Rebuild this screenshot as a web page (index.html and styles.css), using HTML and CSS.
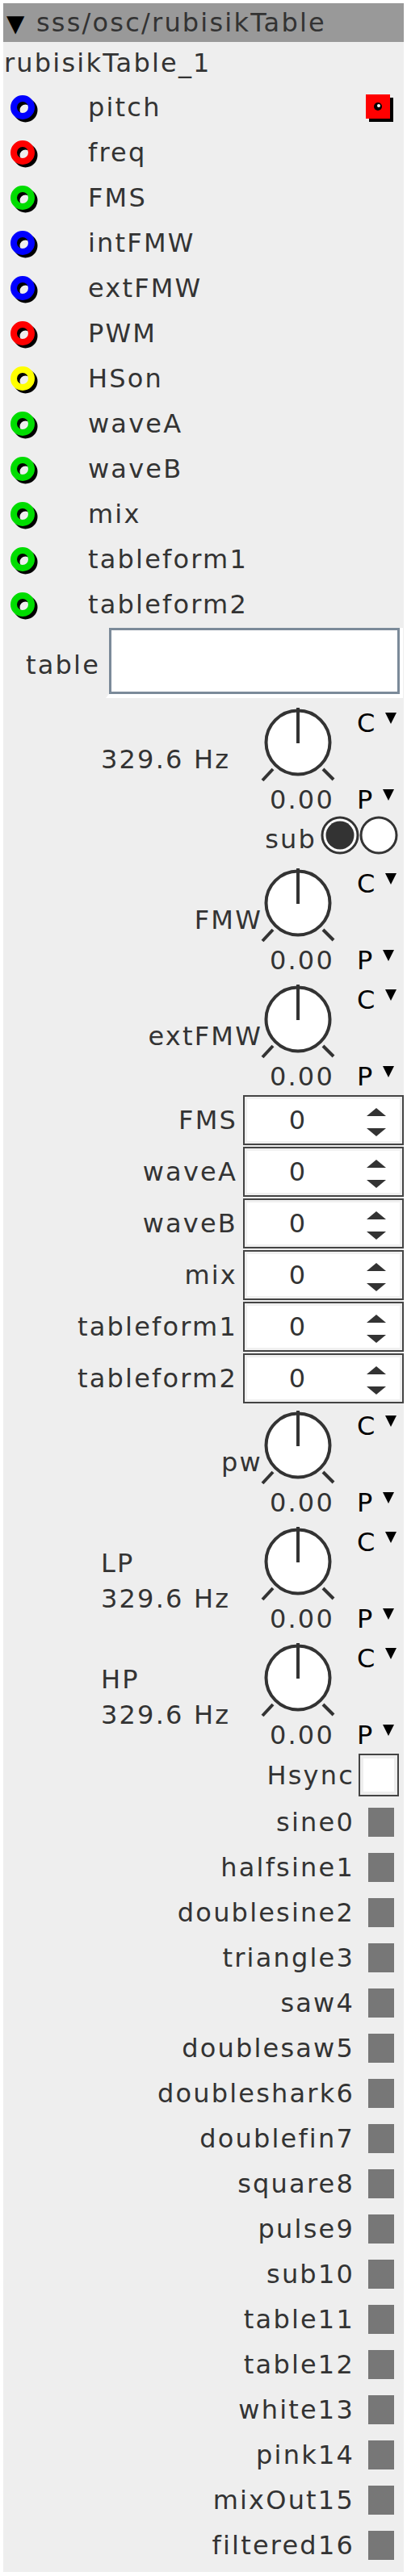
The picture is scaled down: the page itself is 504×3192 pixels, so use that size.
FILE: index.html
```html
<!DOCTYPE html>
<html lang="en">
<head>
    <meta charset="UTF-8">
    <title>sss/osc/rubisikTable</title>
    <link rel="stylesheet" href="styles.css">
</head>
<body>
    <div class="panel">
        <div class="hdr"><span class="hdr-arrow">▼</span>sss/osc/rubisikTable</div>
        <div class="name">rubisikTable_1</div>

        <!-- inlets -->
        <div class="inlet blue">
            <svg class="jack" width="36" height="36"><circle cx="18.5" cy="18.5" r="11" fill="none" stroke="#000" stroke-width="8"/><circle cx="15" cy="15" r="11" fill="none" stroke="currentColor" stroke-width="8"/></svg>
            <span class="lbl">pitch</span>
            <svg class="outlet" width="34" height="34"><rect x="4" y="4" width="30" height="30" fill="#000"/><rect x="0" y="0" width="30" height="30" fill="#f00"/><circle cx="15" cy="15" r="5" fill="#000"/><circle cx="16" cy="14" r="2" fill="#fff"/></svg>
        </div>
        <div class="inlet red">
            <svg class="jack" width="36" height="36"><circle cx="18.5" cy="18.5" r="11" fill="none" stroke="#000" stroke-width="8"/><circle cx="15" cy="15" r="11" fill="none" stroke="currentColor" stroke-width="8"/></svg>
            <span class="lbl">freq</span>
        </div>
        <div class="inlet green">
            <svg class="jack" width="36" height="36"><circle cx="18.5" cy="18.5" r="11" fill="none" stroke="#000" stroke-width="8"/><circle cx="15" cy="15" r="11" fill="none" stroke="currentColor" stroke-width="8"/></svg>
            <span class="lbl">FMS</span>
        </div>
        <div class="inlet blue">
            <svg class="jack" width="36" height="36"><circle cx="18.5" cy="18.5" r="11" fill="none" stroke="#000" stroke-width="8"/><circle cx="15" cy="15" r="11" fill="none" stroke="currentColor" stroke-width="8"/></svg>
            <span class="lbl">intFMW</span>
        </div>
        <div class="inlet blue">
            <svg class="jack" width="36" height="36"><circle cx="18.5" cy="18.5" r="11" fill="none" stroke="#000" stroke-width="8"/><circle cx="15" cy="15" r="11" fill="none" stroke="currentColor" stroke-width="8"/></svg>
            <span class="lbl">extFMW</span>
        </div>
        <div class="inlet red">
            <svg class="jack" width="36" height="36"><circle cx="18.5" cy="18.5" r="11" fill="none" stroke="#000" stroke-width="8"/><circle cx="15" cy="15" r="11" fill="none" stroke="currentColor" stroke-width="8"/></svg>
            <span class="lbl">PWM</span>
        </div>
        <div class="inlet yellow">
            <svg class="jack" width="36" height="36"><circle cx="18.5" cy="18.5" r="11" fill="none" stroke="#000" stroke-width="8"/><circle cx="15" cy="15" r="11" fill="none" stroke="currentColor" stroke-width="8"/></svg>
            <span class="lbl">HSon</span>
        </div>
        <div class="inlet green">
            <svg class="jack" width="36" height="36"><circle cx="18.5" cy="18.5" r="11" fill="none" stroke="#000" stroke-width="8"/><circle cx="15" cy="15" r="11" fill="none" stroke="currentColor" stroke-width="8"/></svg>
            <span class="lbl">waveA</span>
        </div>
        <div class="inlet green">
            <svg class="jack" width="36" height="36"><circle cx="18.5" cy="18.5" r="11" fill="none" stroke="#000" stroke-width="8"/><circle cx="15" cy="15" r="11" fill="none" stroke="currentColor" stroke-width="8"/></svg>
            <span class="lbl">waveB</span>
        </div>
        <div class="inlet green">
            <svg class="jack" width="36" height="36"><circle cx="18.5" cy="18.5" r="11" fill="none" stroke="#000" stroke-width="8"/><circle cx="15" cy="15" r="11" fill="none" stroke="currentColor" stroke-width="8"/></svg>
            <span class="lbl">mix</span>
        </div>
        <div class="inlet green">
            <svg class="jack" width="36" height="36"><circle cx="18.5" cy="18.5" r="11" fill="none" stroke="#000" stroke-width="8"/><circle cx="15" cy="15" r="11" fill="none" stroke="currentColor" stroke-width="8"/></svg>
            <span class="lbl">tableform1</span>
        </div>
        <div class="inlet green">
            <svg class="jack" width="36" height="36"><circle cx="18.5" cy="18.5" r="11" fill="none" stroke="#000" stroke-width="8"/><circle cx="15" cy="15" r="11" fill="none" stroke="currentColor" stroke-width="8"/></svg>
            <span class="lbl">tableform2</span>
        </div>

        <!-- table name -->
        <div class="trow">
            <span class="tlbl">table</span>
            <div class="twrap"><div class="tfield"></div></div>
        </div>

        <!-- freq knob -->
        <div class="knob">
            <div class="kl hz">329.6 Hz</div>
            <svg class="kdial" width="96" height="102"><line x1="4" y1="98" x2="17" y2="84" /><line x1="79" y1="84" x2="92" y2="97" /><circle cx="48" cy="51" r="39.5" /><line x1="48" y1="8" x2="48" y2="52" /></svg>
            <div class="kc">C<span class="dd"></span></div>
            <div class="kv">0.00</div>
            <div class="kp">P<span class="dd"></span></div>
        </div>

        <div class="subrow">
            <span class="sublbl">sub</span>
            <svg width="48" height="48"><circle cx="24" cy="24" r="22" fill="#fff" stroke="#333" stroke-width="3"/><circle cx="24" cy="24" r="17.5" fill="#333"/></svg>
            <svg width="48" height="48"><circle cx="24" cy="24" r="22" fill="#fff" stroke="#333" stroke-width="3"/></svg>
        </div>

        <div class="knob">
            <div class="kl">FMW</div>
            <svg class="kdial" width="96" height="102"><line x1="4" y1="98" x2="17" y2="84" /><line x1="79" y1="84" x2="92" y2="97" /><circle cx="48" cy="51" r="39.5" /><line x1="48" y1="8" x2="48" y2="52" /></svg>
            <div class="kc">C<span class="dd"></span></div>
            <div class="kv">0.00</div>
            <div class="kp">P<span class="dd"></span></div>
        </div>

        <div class="knob">
            <div class="kl">extFMW</div>
            <svg class="kdial" width="96" height="102"><line x1="4" y1="98" x2="17" y2="84" /><line x1="79" y1="84" x2="92" y2="97" /><circle cx="48" cy="51" r="39.5" /><line x1="48" y1="8" x2="48" y2="52" /></svg>
            <div class="kc">C<span class="dd"></span></div>
            <div class="kv">0.00</div>
            <div class="kp">P<span class="dd"></span></div>
        </div>

        <!-- integer spinners -->
        <div class="nrow"><span class="nlbl">FMS</span><div class="nbox"><span class="nval">0</span><svg class="spin" width="24" height="36"><polygon points="0,10 12,0 24,10"/><polygon points="0,25 24,25 12,35"/></svg></div></div>
        <div class="nrow"><span class="nlbl">waveA</span><div class="nbox"><span class="nval">0</span><svg class="spin" width="24" height="36"><polygon points="0,10 12,0 24,10"/><polygon points="0,25 24,25 12,35"/></svg></div></div>
        <div class="nrow"><span class="nlbl">waveB</span><div class="nbox"><span class="nval">0</span><svg class="spin" width="24" height="36"><polygon points="0,10 12,0 24,10"/><polygon points="0,25 24,25 12,35"/></svg></div></div>
        <div class="nrow"><span class="nlbl">mix</span><div class="nbox"><span class="nval">0</span><svg class="spin" width="24" height="36"><polygon points="0,10 12,0 24,10"/><polygon points="0,25 24,25 12,35"/></svg></div></div>
        <div class="nrow"><span class="nlbl">tableform1</span><div class="nbox"><span class="nval">0</span><svg class="spin" width="24" height="36"><polygon points="0,10 12,0 24,10"/><polygon points="0,25 24,25 12,35"/></svg></div></div>
        <div class="nrow"><span class="nlbl">tableform2</span><div class="nbox"><span class="nval">0</span><svg class="spin" width="24" height="36"><polygon points="0,10 12,0 24,10"/><polygon points="0,25 24,25 12,35"/></svg></div></div>

        <div class="knob">
            <div class="kl">pw</div>
            <svg class="kdial" width="96" height="102"><line x1="4" y1="98" x2="17" y2="84" /><line x1="79" y1="84" x2="92" y2="97" /><circle cx="48" cy="51" r="39.5" /><line x1="48" y1="8" x2="48" y2="52" /></svg>
            <div class="kc">C<span class="dd"></span></div>
            <div class="kv">0.00</div>
            <div class="kp">P<span class="dd"></span></div>
        </div>

        <div class="knob">
            <div class="kl two">LP<br>329.6 Hz</div>
            <svg class="kdial" width="96" height="102"><line x1="4" y1="98" x2="17" y2="84" /><line x1="79" y1="84" x2="92" y2="97" /><circle cx="48" cy="51" r="39.5" /><line x1="48" y1="8" x2="48" y2="52" /></svg>
            <div class="kc">C<span class="dd"></span></div>
            <div class="kv">0.00</div>
            <div class="kp">P<span class="dd"></span></div>
        </div>

        <div class="knob">
            <div class="kl two">HP<br>329.6 Hz</div>
            <svg class="kdial" width="96" height="102"><line x1="4" y1="98" x2="17" y2="84" /><line x1="79" y1="84" x2="92" y2="97" /><circle cx="48" cy="51" r="39.5" /><line x1="48" y1="8" x2="48" y2="52" /></svg>
            <div class="kc">C<span class="dd"></span></div>
            <div class="kv">0.00</div>
            <div class="kp">P<span class="dd"></span></div>
        </div>

        <div class="hsync">
            <span class="hlbl">Hsync</span>
            <div class="check"></div>
        </div>

        <!-- outlets -->
        <div class="orow"><span class="olbl">sine0</span><span class="osq"></span></div>
        <div class="orow"><span class="olbl">halfsine1</span><span class="osq"></span></div>
        <div class="orow"><span class="olbl">doublesine2</span><span class="osq"></span></div>
        <div class="orow"><span class="olbl">triangle3</span><span class="osq"></span></div>
        <div class="orow"><span class="olbl">saw4</span><span class="osq"></span></div>
        <div class="orow"><span class="olbl">doublesaw5</span><span class="osq"></span></div>
        <div class="orow"><span class="olbl">doubleshark6</span><span class="osq"></span></div>
        <div class="orow"><span class="olbl">doublefin7</span><span class="osq"></span></div>
        <div class="orow"><span class="olbl">square8</span><span class="osq"></span></div>
        <div class="orow"><span class="olbl">pulse9</span><span class="osq"></span></div>
        <div class="orow"><span class="olbl">sub10</span><span class="osq"></span></div>
        <div class="orow"><span class="olbl">table11</span><span class="osq"></span></div>
        <div class="orow"><span class="olbl">table12</span><span class="osq"></span></div>
        <div class="orow"><span class="olbl">white13</span><span class="osq"></span></div>
        <div class="orow"><span class="olbl">pink14</span><span class="osq"></span></div>
        <div class="orow"><span class="olbl">mixOut15</span><span class="osq"></span></div>
        <div class="orow"><span class="olbl">filtered16</span><span class="osq"></span></div>
    </div>
</body>
</html>
```

FILE: styles.css
```css
body {
    margin: 4px;
    background: #fff;
}
.panel {
    width: 496px;
    background: #eeeeee;
    font-family: "DejaVu Sans", sans-serif;
    font-size: 32px;
    letter-spacing: 2.2px;
    color: #333;
    padding-bottom: 5px;
}
.hdr {
    height: 48px;
    line-height: 48px;
    background: #999;
    white-space: nowrap;
}
.hdr-arrow {
    display: inline-block;
    width: 37px;
    padding-left: 4px;
    font-size: 29px;
    color: #000;
    letter-spacing: 0;
}
.name {
    height: 53px;
    line-height: 53px;
    padding-left: 1px;
}

/* inlets */
.inlet {
    display: flex;
    align-items: flex-start;
    height: 56px;
    line-height: 56px;
    padding-left: 9px;
}
.inlet .jack {
    margin-top: 13px;
    flex: none;
}
.inlet .lbl {
    margin-left: 60px;
    color: #333;
}
.blue { color: #0000ff; }
.red { color: #ff0000; }
.green { color: #00dd00; }
.yellow { color: #ffff00; }
.outlet {
    margin-left: auto;
    margin-right: 13px;
    margin-top: 12px;
}

/* table field */
.trow {
    display: flex;
    align-items: flex-start;
    height: 92px;
    padding-left: 28px;
}
.tlbl {
    line-height: 56px;
    margin-top: 19px;
}
.twrap {
    margin-left: 7px;
    margin-top: 1px;
    border-style: solid;
    border-width: 0 4px 5px 4px;
    border-color: transparent #fff #fff transparent;
}
.tfield {
    width: 354px;
    height: 76px;
    background: #fff;
    border: 3px solid #7b8a99;
}

/* knobs */
.knob {
    display: grid;
    grid-template-columns: 317px 96px 1fr;
    grid-template-rows: 102px 42px;
    height: 144px;
}
.kl {
    grid-row: 1 / 3;
    grid-column: 1;
    padding-top: 52px;
    line-height: 40px;
    text-align: right;
    margin-right: -4px;
    white-space: nowrap;
}
.kl.hz {
    text-align: left;
    padding-left: 121px;
}
.kl.two {
    text-align: left;
    padding-left: 121px;
    padding-top: 31px;
    line-height: 44px;
}
.kdial {
    grid-row: 1;
    grid-column: 2;
    overflow: visible;
}
.kdial circle {
    fill: #fff;
    stroke: #333;
    stroke-width: 4;
}
.kdial line {
    stroke: #333;
    stroke-width: 4;
}
.kc, .kp {
    grid-column: 3;
    padding-left: 25px;
    line-height: 40px;
    color: #000;
    letter-spacing: 0;
}
.kc {
    grid-row: 1;
    padding-top: 7px;
}
.kp {
    grid-row: 2;
}
.kv {
    grid-row: 2;
    grid-column: 2;
    line-height: 40px;
    text-align: right;
    padding-right: 3px;
    white-space: nowrap;
}
.dd {
    display: inline-block;
    width: 0;
    height: 0;
    margin-left: 13px;
    border-left: 7.5px solid transparent;
    border-right: 7.5px solid transparent;
    border-top: 14px solid #000;
    vertical-align: 10px;
}

/* sub radio */
.subrow {
    display: flex;
    justify-content: flex-end;
    align-items: flex-start;
    height: 55px;
    padding-right: 7px;
}
.sublbl {
    line-height: 55px;
    margin-right: 5px;
}
.subrow svg {
    margin-top: -2px;
}

/* spinners */
.nrow {
    display: flex;
    justify-content: flex-end;
    align-items: center;
    height: 64px;
}
.nlbl {
    line-height: 64px;
    padding-right: 7px;
}
.nbox {
    display: flex;
    align-items: center;
    width: 195px;
    height: 58px;
    background: #fff;
    border: 2px solid #444;
    box-shadow: inset 0 0 0 3px #f0f0f0;
}
.nval {
    width: 132px;
    text-align: center;
    line-height: 58px;
}
.spin {
    margin-left: 19px;
    margin-top: 5px;
    fill: #333;
}

/* Hsync */
.hsync {
    display: flex;
    justify-content: flex-end;
    align-items: flex-start;
    height: 58px;
    padding-right: 6px;
}
.hlbl {
    line-height: 56px;
    margin-right: 5px;
}
.check {
    width: 46px;
    height: 49px;
    margin-top: 1px;
    background: #fff;
    border: 2px solid #444;
    box-shadow: inset 0 0 0 4px #eee;
}

/* outlets */
.orow {
    display: flex;
    justify-content: flex-end;
    align-items: center;
    height: 56px;
    padding-right: 12px;
}
.olbl {
    line-height: 52px;
    margin-right: 17px;
}
.osq {
    width: 32px;
    height: 36px;
    background: #777;
}
```
